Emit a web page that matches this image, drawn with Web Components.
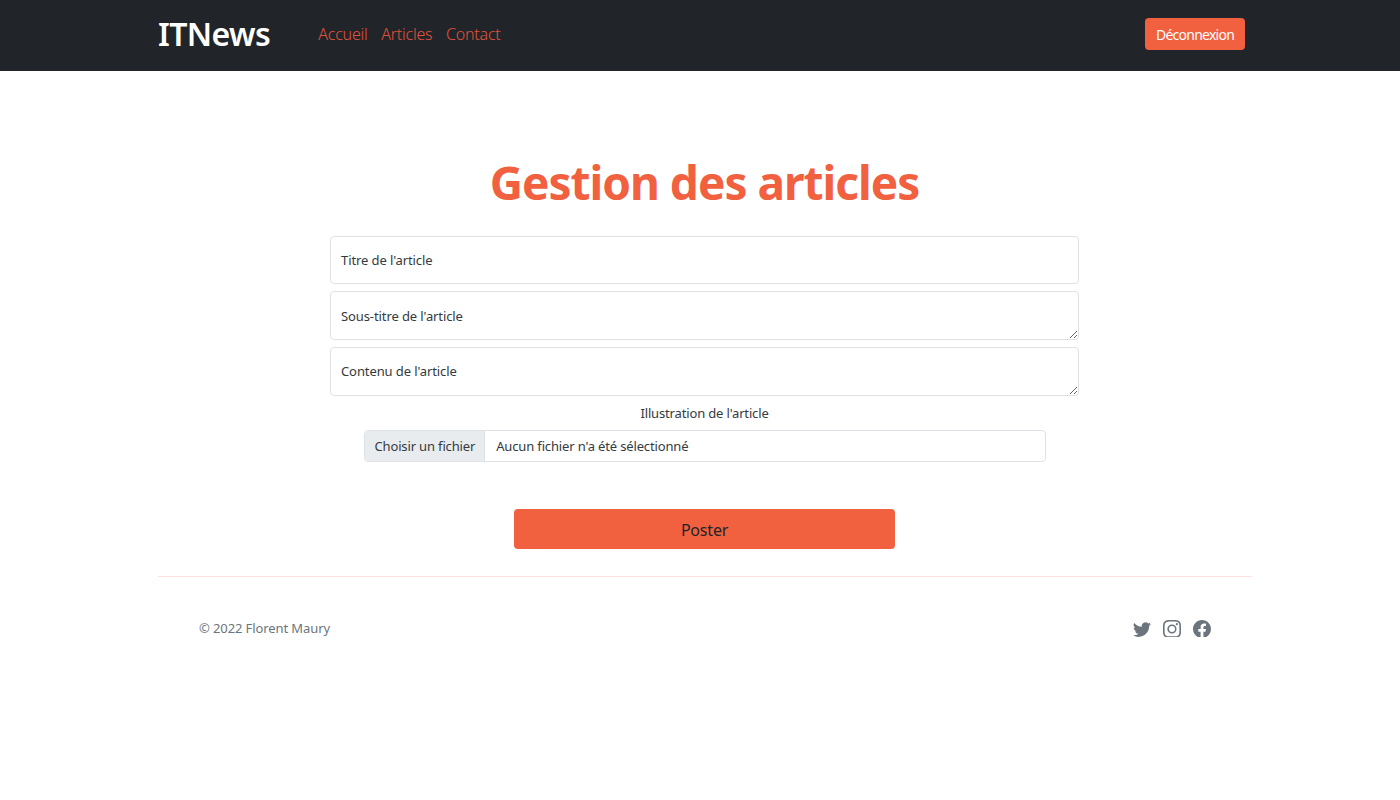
<!DOCTYPE html>
<html lang="fr">
<head>
<meta charset="utf-8">
<title>ITNews</title>
<style>
    html, body { margin: 0; padding: 0; background: #fff; }
    body { font-family: "Noto Sans", "Open Sans", sans-serif; color: #212529; }
</style>
</head>
<body>
<site-header></site-header>
<article-form></article-form>
<site-footer></site-footer>

<script>
class SiteHeader extends HTMLElement {
    constructor() {
        super();
        this.attachShadow({ mode: 'open' });
    }

    connectedCallback() {
        this.shadowRoot.innerHTML = `
            <style>
                :host { display: block; background: #212529; }
                .bar {
                    display: flex;
                    align-items: center;
                    height: 68px;
                    padding: 0 155px 3px 158px;
                }
                .logo {
                    color: #fff;
                    font-size: 32px;
                    font-weight: 600;
                    letter-spacing: -0.6px;
                    margin-right: 48px;
                    text-decoration: none;
                    line-height: 1;
                }
                nav { display: flex; gap: 13.5px; flex: 1; }
                nav a {
                    color: #e0523d;
                    font-size: 16px;
                    letter-spacing: -0.2px;
                    font-weight: 300;
                    text-decoration: none;
                }
                button {
                    background: #f1603f;
                    color: #fff;
                    border: 0;
                    border-radius: 4px;
                    font: inherit;
                    font-size: 14px;
                    letter-spacing: -0.75px;
                    width: 100px;
                    height: 32px;
                    padding: 0;
                }
            </style>
            <div class="bar">
                <a class="logo" href="#">ITNews</a>
                <nav>
                    <a href="#">Accueil</a>
                    <a href="#">Articles</a>
                    <a href="#">Contact</a>
                </nav>
                <button>Déconnexion</button>
            </div>
        `;
    }
}

class FloatField extends HTMLElement {
    constructor() {
        super();
        this.attachShadow({ mode: 'open' });
    }

    connectedCallback() {
        const control = this.hasAttribute('multiline') ? '<textarea></textarea>' : '<input type="text">';
        this.shadowRoot.innerHTML = `
            <style>
                :host { display: block; position: relative; height: 49px; }
                :host(:not([multiline])) { height: 48px; }
                input, textarea {
                    display: block;
                    box-sizing: border-box;
                    width: 100%;
                    height: 100%;
                    margin: 0;
                    padding: 0;
                    background: #fff;
                    border: 1px solid #dee2e6;
                    border-radius: 4px;
                    outline: 0;
                }
                label {
                    position: absolute;
                    left: 11px;
                    top: var(--label-top, 0);
                    line-height: 49px;
                    font-size: 13px;
                    letter-spacing: -0.1px;
                    color: #343a40;
                }
            </style>
            ${control}
            <label><slot></slot></label>
        `;
    }
}

class FilePicker extends HTMLElement {
    constructor() {
        super();
        this.attachShadow({ mode: 'open' });
    }

    connectedCallback() {
        this.shadowRoot.innerHTML = `
            <style>
                :host {
                    display: flex;
                    box-sizing: border-box;
                    height: 32px;
                    border: 1px solid #dee2e6;
                    border-radius: 4px;
                    overflow: hidden;
                    font-size: 13px;
                    letter-spacing: -0.15px;
                    line-height: 30px;
                    color: #343a40;
                }
                .pick {
                    background: #e9ecef;
                    border-right: 1px solid #dee2e6;
                    padding: 0 9px 0 10px;
                }
                .name { padding: 0 11px; }
            </style>
            <span class="pick">Choisir un fichier</span>
            <span class="name">Aucun fichier n'a été sélectionné</span>
        `;
    }
}

class ArticleForm extends HTMLElement {
    constructor() {
        super();
        this.attachShadow({ mode: 'open' });
    }

    connectedCallback() {
        this.shadowRoot.innerHTML = `
            <style>
                :host { display: block; width: 1093px; margin-left: 158px; }
                h1 {
                    margin: 0;
                    padding-top: 81px;
                    text-align: center;
                    color: #f1603f;
                    font-size: 46px;
                    line-height: 60px;
                    font-weight: 700;
                    letter-spacing: -1px;
                }
                form {
                    display: flex;
                    flex-direction: column;
                    width: 749px;
                    margin: 24px auto 0;
                }
                float-field + float-field { margin-top: 7px; }
                .subtitle { --label-top: 1px; }
                .caption {
                    margin-top: 8px;
                    text-align: center;
                    font-size: 13px;
                    line-height: 18px;
                    letter-spacing: -0.15px;
                    color: #343a40;
                }
                file-picker { width: 682px; margin: 8px auto 0; }
                button {
                    align-self: center;
                    width: 381px;
                    height: 40px;
                    margin-top: 47px;
                    background: #f1603f;
                    color: #212529;
                    border: 0;
                    border-radius: 4px;
                    font: inherit;
                    font-size: 16px;
                    letter-spacing: -0.2px;
                    padding: 2px 0 0;
                }
            </style>
            <h1>Gestion des articles</h1>
            <form>
                <float-field>Titre de l'article</float-field>
                <float-field class="subtitle" multiline>Sous-titre de l'article</float-field>
                <float-field multiline>Contenu de l'article</float-field>
                <div class="caption">Illustration de l'article</div>
                <file-picker></file-picker>
                <button type="button">Poster</button>
            </form>
        `;
    }
}

class SiteFooter extends HTMLElement {
    constructor() {
        super();
        this.attachShadow({ mode: 'open' });
    }

    connectedCallback() {
        this.shadowRoot.innerHTML = `
            <style>
                :host { display: block; margin: 27px 148px 0 158px; }
                footer {
                    display: flex;
                    align-items: center;
                    justify-content: space-between;
                    border-top: 1px solid #fde3db;
                    padding: 42px 41px 0 41px;
                    color: #6c757d;
                    font-size: 13px;
                    letter-spacing: -0.1px;
                }
                .icons { display: flex; gap: 12px; position: relative; top: 1px; }
                svg { display: block; width: 18px; height: 18px; fill: #6c757d; }
            </style>
            <footer>
                <span>© 2022 Florent Maury</span>
                <div class="icons">
                    <svg viewBox="0 0 16 16"><path d="M5.026 15c6.038 0 9.341-5.003 9.341-9.334 0-.14 0-.282-.006-.422A6.685 6.685 0 0 0 16 3.542a6.658 6.658 0 0 1-1.889.518 3.301 3.301 0 0 0 1.447-1.817 6.533 6.533 0 0 1-2.087.793A3.286 3.286 0 0 0 7.875 6.03a9.325 9.325 0 0 1-6.767-3.429 3.289 3.289 0 0 0 1.018 4.382A3.323 3.323 0 0 1 .64 6.575v.045a3.288 3.288 0 0 0 2.632 3.218 3.203 3.203 0 0 1-.865.115 3.23 3.23 0 0 1-.614-.057 3.283 3.283 0 0 0 3.067 2.277A6.588 6.588 0 0 1 .78 13.58a6.32 6.32 0 0 1-.78-.045A9.344 9.344 0 0 0 5.026 15z"/></svg>
                    <svg viewBox="0 0 16 16"><path d="M8 0C5.829 0 5.556.01 4.703.048 3.85.088 3.269.222 2.76.42a3.917 3.917 0 0 0-1.417.923A3.927 3.927 0 0 0 .42 2.76C.222 3.268.087 3.85.048 4.7.01 5.555 0 5.827 0 8.001c0 2.172.01 2.444.048 3.297.04.852.174 1.433.372 1.942.205.526.478.972.923 1.417.444.445.89.719 1.416.923.51.198 1.09.333 1.942.372C5.555 15.99 5.827 16 8 16s2.444-.01 3.298-.048c.851-.04 1.434-.174 1.943-.372a3.916 3.916 0 0 0 1.416-.923c.445-.445.718-.891.923-1.417.197-.509.332-1.09.372-1.942C15.99 10.445 16 10.173 16 8s-.01-2.445-.048-3.299c-.04-.851-.175-1.433-.372-1.941a3.926 3.926 0 0 0-.923-1.417A3.911 3.911 0 0 0 13.24.42c-.51-.198-1.092-.333-1.943-.372C10.443.01 10.172 0 7.998 0h.003zm-.717 1.442h.718c2.136 0 2.389.007 3.232.046.78.035 1.204.166 1.486.275.373.145.64.319.92.599.28.28.453.546.598.92.11.281.24.705.275 1.485.039.843.047 1.096.047 3.231s-.008 2.389-.047 3.232c-.035.78-.166 1.203-.275 1.485a2.47 2.47 0 0 1-.599.919c-.28.28-.546.453-.92.598-.28.11-.704.24-1.485.276-.843.038-1.096.047-3.232.047s-2.39-.009-3.233-.047c-.78-.036-1.203-.166-1.485-.276a2.478 2.478 0 0 1-.92-.598 2.48 2.48 0 0 1-.6-.92c-.109-.281-.24-.705-.275-1.485-.038-.843-.046-1.096-.046-3.233 0-2.136.008-2.388.046-3.231.036-.78.166-1.204.276-1.486.145-.373.319-.64.599-.92.28-.28.546-.453.92-.598.282-.11.705-.24 1.485-.276.738-.034 1.024-.044 2.515-.045v.002zm4.988 1.328a.96.96 0 1 0 0 1.92.96.96 0 0 0 0-1.92zm-4.27 1.122a4.109 4.109 0 1 0 0 8.217 4.109 4.109 0 0 0 0-8.217zm0 1.441a2.667 2.667 0 1 1 0 5.334 2.667 2.667 0 0 1 0-5.334z"/></svg>
                    <svg viewBox="0 0 16 16"><path d="M16 8.049c0-4.446-3.582-8.05-8-8.05C3.58 0-.002 3.603-.002 8.05c0 4.017 2.926 7.347 6.75 7.951v-5.625h-2.03V8.05H6.75V6.275c0-2.017 1.195-3.131 3.022-3.131.876 0 1.791.157 1.791.157v1.98h-1.009c-.993 0-1.303.621-1.303 1.258v1.51h2.218l-.354 2.326H9.25V16c3.824-.604 6.75-3.934 6.75-7.951z"/></svg>
                </div>
            </footer>
        `;
    }
}

customElements.define('site-header', SiteHeader);
customElements.define('float-field', FloatField);
customElements.define('file-picker', FilePicker);
customElements.define('article-form', ArticleForm);
customElements.define('site-footer', SiteFooter);
</script>
</body>
</html>
